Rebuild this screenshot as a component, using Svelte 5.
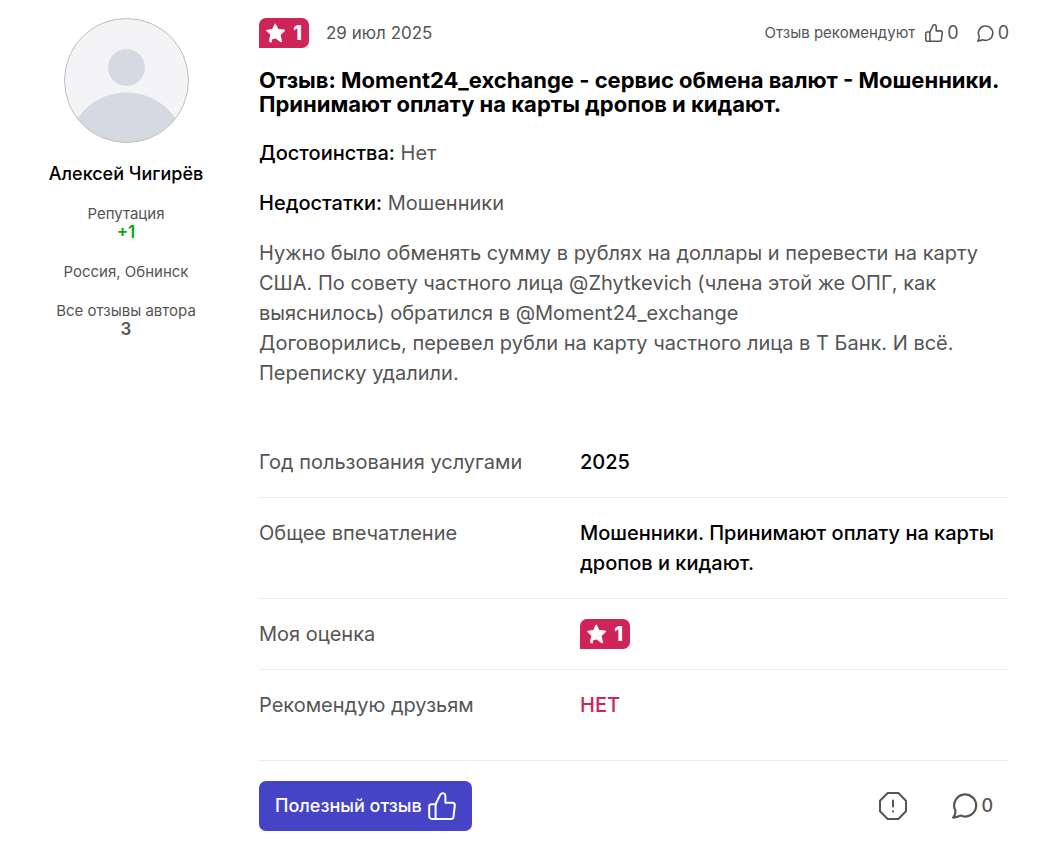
<script>
  const rating = 1;
  const likes = 0;
  const comments = 0;
</script>

{#snippet thumb(size, stroke)}
  <svg width={size} height={size} viewBox="0 0 28 28" fill="none" stroke="currentColor" stroke-width={stroke} stroke-linejoin="round" stroke-linecap="round" aria-hidden="true">
    <path d="M1.2 14.2v10.1a2.6 2.6 0 0 0 2.6 2.6h19.4a2.3 2.3 0 0 0 2.3-2l1.3-11.5a2.4 2.4 0 0 0-2.4-2.7h-7V3.900a2.700 2.700 0 0 0-5-1.400L7.600 12.300H3.300a2.100 2.100 0 0 0-2.100 1.900z" />
    <path d="M7.6 12.3v14.4" />
  </svg>
{/snippet}

{#snippet bubble(size, stroke)}
  <svg width={size} height={size} viewBox="0 0 26 26" fill="none" stroke="currentColor" stroke-width={stroke} stroke-linejoin="round" stroke-linecap="round" aria-hidden="true">
    <path d="M3.4 17.6A11 11 0 1 1 8.8 22.6Q5 24.3 1.2 24.6Q3.7 21.5 3.4 17.6z" />
  </svg>
{/snippet}

{#snippet badge()}
  <span class="badge">
    <svg width="20" height="20" viewBox="0 0 20 20" fill="currentColor" aria-hidden="true">
      <path d="M8.4 1.400c.4-1.100 1.300-1.100 1.700 0l2.200 4.600 5.600.6c1.200.1 1.400.9.700 1.600l-4 3.700 1.300 5.900c.2 1.200-.6 1.700-1.600 1.100l-4.600-3.400c-1.700.1-3.500.8-4.300 1.700.9.300 1 1.800-.2 2.200-1.500.3-2.400-1-2-2.800L4.400 11.800.600 8.300c-.8-.8-.5-1.500.5-1.600L6.200 6z" />
    </svg>
    <b>{rating}</b>
  </span>
{/snippet}

<article class="review">
  <aside class="author">
    <svg class="avatar" width="125" height="125" viewBox="0 0 125 125" role="img" aria-label="Алексей Чигирёв">
      <defs>
        <clipPath id="face"><circle cx="62.5" cy="62.5" r="62" /></clipPath>
      </defs>
      <circle cx="62.5" cy="62.5" r="62" fill="#f4f4f7" />
      <g clip-path="url(#face)" fill="#d5d9e2">
        <circle cx="62.5" cy="49.5" r="18.5" />
        <circle cx="62.5" cy="134" r="59.5" />
      </g>
      <circle cx="62.5" cy="62.5" r="62" fill="none" stroke="#bdbdbd" />
    </svg>
    <a class="name" href="#author">Алексей Чигирёв</a>
    <div class="fact">Репутация<b class="plus">+1</b></div>
    <div class="fact">Россия, Обнинск</div>
    <div class="fact">Все отзывы автора<b>3</b></div>
  </aside>

  <div class="content">
    <header>
      {@render badge()}
      <time datetime="2025-07-29">29 июл 2025</time>
      <span class="recommend">Отзыв рекомендуют</span>
      <span class="count">{@render thumb(18, 2.4)}{likes}</span>
      <span class="count">{@render bubble(17, 2.4)}{comments}</span>
    </header>

    <h1>Отзыв: Moment24_exchange - сервис обмена валют - Мошенники. Принимают оплату на карты дропов и кидают.</h1>

    <p><strong>Достоинства:</strong> Нет</p>
    <p><strong>Недостатки:</strong> Мошенники</p>
    <p class="body">
      Нужно было обменять сумму в рублях на доллары и перевести на карту США. По совету частного лица @Zhytkevich (члена этой же ОПГ, как выяснилось) обратился в @Moment24_exchange<br />
      Договорились, перевел рубли на карту частного лица в Т Банк. И всё. Переписку удалили.
    </p>

    <table>
      <tbody>
        <tr><th scope="row">Год пользования услугами</th><td>2025</td></tr>
        <tr><th scope="row">Общее впечатление</th><td>Мошенники. Принимают оплату на карты дропов и кидают.</td></tr>
        <tr><th scope="row">Моя оценка</th><td>{@render badge()}</td></tr>
        <tr><th scope="row">Рекомендую друзьям</th><td class="no">НЕТ</td></tr>
      </tbody>
    </table>

    <footer>
      <button class="useful">Полезный отзыв {@render thumb(28, 2)}</button>
      <button class="plain report" aria-label="Пожаловаться">
        <svg width="28" height="28" viewBox="0 0 28 28" fill="none" stroke="currentColor" stroke-width="2" stroke-linejoin="round" stroke-linecap="round" aria-hidden="true">
          <path d="M8.7 1h10.6L27 8.7v10.6L19.3 27H8.7L1 19.3V8.7zM14 8.5v6" />
          <path d="M14 19.2v.2" />
        </svg>
      </button>
      <button class="plain">{@render bubble(26, 2.2)}{comments}</button>
    </footer>
  </div>
</article>

<style>
  :global(body) {
    background: #fff;
  }
  .review {
    display: grid;
    grid-template-columns: 216px minmax(0, 1fr);
    gap: 25px;
    padding: 18px 35px 26px 18px;
    font-family: Inter, "Noto Sans", sans-serif;
    font-size: 20px;
    line-height: 30px;
    color: #555;
  }
  svg {
    display: block;
    flex: none;
  }
  .author {
    display: flex;
    flex-direction: column;
    align-items: center;
    text-align: center;
  }
  .name {
    margin: 20px 0;
    font-size: 18px;
    line-height: 21px;
    font-weight: 500;
    color: #000;
    text-decoration: none;
  }
  .fact {
    margin-bottom: 20px;
    font-size: 15px;
    line-height: 19px;
  }
  .fact b {
    display: block;
    font-size: 17px;
    font-weight: 600;
  }
  .fact .plus {
    color: #0a1;
  }
  header {
    display: flex;
    align-items: center;
    height: 30px;
  }
  .badge {
    display: flex;
    align-items: center;
    justify-content: space-between;
    box-sizing: border-box;
    width: 50px;
    height: 30px;
    padding: 0 7px;
    border-radius: 7px 7px 7px 0;
    background: #cf2457;
    color: #fff;
  }
  .badge b {
    font-weight: 800;
  }
  time {
    margin-left: 17px;
    font-size: 17px;
  }
  .recommend {
    margin-left: auto;
    margin-right: 10px;
    font-size: 15px;
  }
  .count {
    display: flex;
    align-items: center;
    gap: 4px;
    font-size: 18px;
  }
  .count + .count {
    margin-left: 18px;
  }
  h1 {
    margin: 20px 0 22px;
    font-size: 22px;
    line-height: 24px;
    font-weight: 700;
    color: #000;
  }
  p {
    margin: 0 0 20px;
  }
  strong {
    font-weight: 500;
    color: #000;
  }
  .body {
    margin-bottom: 39px;
  }
  table {
    width: 100%;
    border-collapse: collapse;
    border-bottom: 1px solid #ebebeb;
  }
  tr + tr {
    border-top: 1px solid #ebebeb;
  }
  th,
  td {
    padding: 20px 0;
    text-align: left;
    vertical-align: top;
  }
  th {
    width: 321px;
    font-weight: 400;
  }
  td {
    font-weight: 500;
    color: #000;
  }
  td.no {
    color: #cf2457;
  }
  tr:last-child > * {
    padding-bottom: 40px;
  }
  footer {
    display: flex;
    align-items: center;
    padding: 20px 16px 0 0;
  }
  button {
    display: flex;
    align-items: center;
    padding: 0;
    border: 0;
    font: inherit;
    font-size: 18px;
    font-weight: 500;
    cursor: pointer;
  }
  .useful {
    gap: 6px;
    height: 50px;
    padding: 0 16px;
    border-radius: 7px;
    background: #4543c6;
    color: #fff;
  }
  .plain {
    gap: 3px;
    background: none;
    color: #555;
  }
  .report {
    margin: 0 45px 0 auto;
  }
</style>
